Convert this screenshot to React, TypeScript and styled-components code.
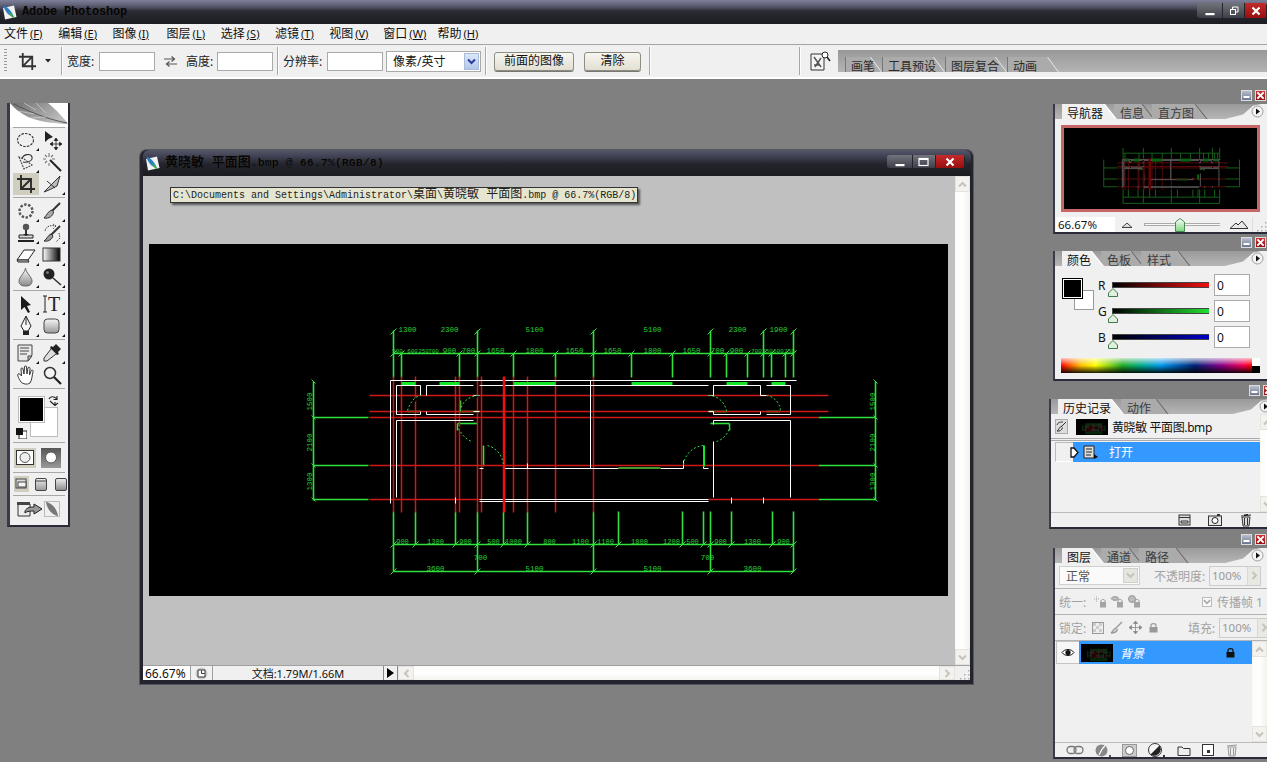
import React from "react";
import styled, { createGlobalStyle } from "styled-components";

const SANS = `"Noto Sans","Noto Sans CJK SC",sans-serif`;
const MONO = `"Liberation Mono","Noto Sans CJK SC",monospace`;

const Global = createGlobalStyle`
  html, body { margin: 0; padding: 0; width: 100%; height: 100%; overflow: hidden; background: #808080; }
  * { box-sizing: border-box; }
  #root { width: 100%; height: 100%; }
`;

const Shell = styled.div`
  width: 1267px; height: 762px; display: flex; flex-direction: column; overflow: hidden;
  font-family: ${SANS}; font-size: 12px; color: #111;
`;

/* ---------- app chrome ---------- */
const AppBar = styled.header`
  height: 24px; flex: none; display: flex; align-items: center; padding-left: 2px;
  background: linear-gradient(#7d7f99 0, #6d6f86 3px, #4a4b5b 8px, #2a2b33 11px, #1c1d23 24px);
`;
const AppTitle = styled.span`
  margin-left: 5px; font: bold 12px/1 ${MONO}; letter-spacing: -.2px; color: #050505;
  text-shadow: 0 0 1px #3a3a3a;
`;
const WinButtons = styled.div<{ $h: number; $mr: number; $mt: number }>`
  display: flex; height: ${p => p.$h}px; align-self: flex-start; margin: ${p => p.$mt}px ${p => p.$mr}px 0 auto; border-radius: 3px; overflow: hidden;
`;
const WinButton = styled.div<{ $w: number; $close?: boolean }>`
  width: ${p => p.$w}px; display: flex; align-items: center; justify-content: center;
  border-right: 1px solid #22232b;
  background: ${p => p.$close ? "linear-gradient(#c52a2a,#970f0f)" : "linear-gradient(#72747c,#3d3e47)"};
`;
const MenuBar = styled.nav`
  height: 21px; flex: none; display: flex; align-items: center; padding-left: 4px;
  background: #f0f0f0; border-bottom: 1px solid #a4a4a4;
`;
const MenuItem = styled.span`
  width: 54.2px; flex: none; font-size: 12px; line-height: 20px; color: #111; white-space: nowrap;
`;
const Accel = styled.span`
  font-size: 11px; margin-left: 2px; text-decoration: underline;
`;
const OptionsBar = styled.div`
  height: 34px; flex: none; display: flex; align-items: center; padding-left: 4px;
  background: linear-gradient(#f0f0f0 32px, #fff 32px);
  padding-bottom: 2px;
`;
const Grip = styled.div`
  width: 3px; height: 24px; background: repeating-linear-gradient(#9a9a9a 0 1px, transparent 1px 3px);
`;
const IconCell = styled.div<{ $w: number; $ml?: number }>`
  width: ${p => p.$w}px; margin-left: ${p => p.$ml ?? 0}px; flex: none; height: 100%;
  display: flex; align-items: center; justify-content: center; gap: ${p => p.$w > 40 ? 8 : 0}px;
`;
const BarSep = styled.div<{ $ml?: number }>`
  width: 2px; height: 28px; flex: none; margin-left: ${p => p.$ml ?? 0}px;
  border-left: 1px solid #a8a8a8; border-right: 1px solid #fff;
`;
const BarLabel = styled.span<{ $w: number; $ml?: number }>`
  width: ${p => p.$w}px; margin-left: ${p => p.$ml ?? 0}px; flex: none; font-size: 12px; color: #222; white-space: nowrap;
`;
const BarField = styled.div`
  width: 56px; height: 19px; flex: none; background: #fff; border: 1px solid #a9a9a9;
`;
const BarSelect = styled.div`
  width: 95px; height: 21px; flex: none; margin-left: 3px; display: flex; align-items: center; justify-content: space-between;
  background: #fff; border: 1px solid #aaa; padding: 1px 1px 1px 6px; font-size: 12px;
`;
const SelectArrow = styled.div`
  width: 15px; height: 17px; display: flex; align-items: center; justify-content: center;
  background: linear-gradient(#dce6f6,#b4c8ec); border: 1px solid #a8bcdc;
`;
const BarButton = styled.button<{ $w: number; $ml: number }>`
  width: ${p => p.$w}px; height: 19px; margin-left: ${p => p.$ml}px; flex: none; padding: 0;
  font: 12px/1 ${SANS}; color: #111; border: 1px solid #8f8d80; border-radius: 3px;
  background: linear-gradient(#f7f6f0,#e2dfd2); box-shadow: 0 1px 0 #777;
`;
const Well = styled.div`
  flex: 1; height: 22px; align-self: flex-start; margin-top: 5px; display: flex; align-items: flex-end; padding-left: 7px;
  background: linear-gradient(#989898,#b4b4b4);
`;
const WellTab = styled.span<{ $w: number }>`
  position: relative; width: ${p => p.$w}px; height: 15px; flex: none; padding-left: 5px;
  font-size: 12px; line-height: 19px; color: #2a2a2a; background: #ababab; border-left: 1px solid #777;
  clip-path: polygon(0 0, calc(100% - 11px) 0, 100% 100%, 0 100%);
  &::after {
    content: ""; position: absolute; right: 5px; top: -2px; width: 1px; height: 20px; background: #eee; transform: rotate(-36deg);
  }
`;

/* ---------- desktop & floating windows ---------- */
const Desktop = styled.main`
  position: relative; flex: 1; background: #808080;
`;
const Float = styled.div<{ $x: number; $y: number; $w: number; $h: number }>`
  position: absolute; left: ${p => p.$x}px; top: ${p => p.$y - 79}px; width: ${p => p.$w}px; height: ${p => p.$h}px;
`;

/* tool palette */
const Palette = styled(Float)`
  display: flex; flex-direction: column; background: #f0f0f0;
  border-left: 3px solid #3a3a4c; border-right: 2px solid #2a2a38; border-bottom: 2px solid #2a2a38;
`;
const FeatherBox = styled.div`
  height: 24px; flex: none; background: #fff; overflow: hidden;
`;
const PalSep = styled.div`
  height: 1px; flex: none; margin: 0 3px; background: #a8a8a8;
`;
const ToolGrid = styled.div<{ $pt: number; $pb: number }>`
  display: grid; grid-template-columns: 26px 26px; grid-auto-rows: 22px;
  padding: ${p => p.$pt}px 0 ${p => p.$pb}px 3px;
`;
const Tool = styled.div<{ $active?: boolean; $more?: boolean }>`
  position: relative; display: flex; align-items: center; justify-content: center;
  ${p => p.$active ? "background:#cfceBf;" : ""}
  ${p => p.$more ? `&::after{content:"";position:absolute;right:0;bottom:0;border-left:3px solid transparent;border-bottom:3px solid #111;}` : ""}
`;
const ColorBlock = styled.div`
  position: relative; height: 53px; flex: none;
`;
const FgSwatch = styled.div`
  position: absolute; left: 8px; top: 7px; width: 27px; height: 27px; background: #000; border: 1px solid #bbb; box-shadow: inset 0 0 0 1px #fff; z-index: 1;
`;
const BgSwatch = styled.div`
  position: absolute; left: 20px; top: 18px; width: 28px; height: 30px; background: #fff; border: 1px solid #bbb;
`;
const OverIcon = styled.div<{ $l: number; $t: number }>`
  position: absolute; left: ${p => p.$l}px; top: ${p => p.$t}px; line-height: 0;
`;
const ModeRow = styled.div<{ $h: number }>`
  height: ${p => p.$h}px; flex: none; display: flex; align-items: center; padding-left: 4px; gap: 5px;
`;
const ModeButton = styled.div<{ $w: number; $active?: boolean; $dark?: boolean }>`
  width: ${p => p.$w}px; height: 20px; display: flex; align-items: center; justify-content: center;
  background: ${p => p.$active ? "#cfcebf" : p.$dark ? "linear-gradient(#555,#999)" : "transparent"};
`;
const ScreenBtn = styled.div<{ $active?: boolean }>`
  width: 16px; height: 16px; display: flex; align-items: center; justify-content: center;
  background: ${p => p.$active ? "#cfcebf" : "transparent"};
`;
const JumpRow = styled.div`
  flex: 1; display: flex; align-items: center; padding: 0 0 3px 7px; gap: 1px;
`;

/* document window */
const DocWindow = styled(Float)`
  display: flex; flex-direction: column; background: #23242e; border-radius: 7px 7px 0 0;
  box-shadow: 0 0 0 1px #55565f; padding: 0 3px 4px;
`;
const DocTitle = styled.div`
  height: 26px; flex: none; display: flex; align-items: center; padding-left: 2px;
  margin: 0 -1px 0 0;
  background: linear-gradient(#555665 0,#45465a 5px,#24252c 14px,#1b1c22 26px); border-radius: 6px 6px 0 0;
`;
const DocTitleText = styled.span`
  margin-left: 5px; font: bold 11.67px/1 ${MONO}; color: #060606; text-shadow: 0 0 1px #444;
`;
const DocTitleHan = styled.span`
  font-size: 13px;
`;
const DocMain = styled.div`
  flex: 1; display: flex; min-height: 0;
`;
const DocArea = styled.div`
  position: relative; flex: 1; display: flex; align-items: center; justify-content: center; background: #c0c0c0;
  padding: 0 1px 1px 0;
`;
const Artboard = styled.div`
  width: 799px; height: 352px; flex: none; background: #000; line-height: 0;
`;
const PathTip = styled.div`
  position: absolute; left: 27px; top: 11px; height: 16px; padding: 0 1px 0 2px; white-space: nowrap;
  background: #e6e6d0; border: 1px solid #333; box-shadow: 2px 2px 2px #555;
  font: 10px/14px ${MONO}; color: #222;
`;
const TipHan = styled.span`
  font-size: 12px;
`;
const ScrollV = styled.div<{ $w?: number }>`
  width: ${p => p.$w ?? 15}px; flex: none; display: flex; flex-direction: column; justify-content: space-between;
  background: linear-gradient(90deg,#fbfbf7,#fff 50%,#f2f1ec);
`;
const ScrollBtn = styled.div<{ $w: number; $h: number }>`
  width: ${p => p.$w}px; height: ${p => p.$h}px; flex: none; display: flex; align-items: center; justify-content: center;
  background: #f3f2ee; border: 1px solid #e4e3dd;
`;
const StatusBar = styled.div`
  height: 15px; flex: none; display: flex; background: #f0f0f0; border-top: 1px solid #a0a0a0;
`;
const StatusZoom = styled.div`
  width: 47px; flex: none; background: #fff; padding-left: 2px; font-size: 12px; line-height: 15px; color: #111;
`;
const StatusIcon = styled.div`
  width: 23px; flex: none; display: flex; align-items: center; justify-content: center; border-left: 1px solid #a0a0a0; border-right: 1px solid #a0a0a0;
`;
const StatusInfo = styled.div`
  width: 170px; flex: none; text-align: center; font-size: 11px; line-height: 15px; color: #111;
`;
const StatusArrow = styled.div`
  width: 15px; flex: none; display: flex; align-items: center; justify-content: center; border-left: 1px solid #888; border-right: 1px solid #888;
`;
const ScrollH = styled.div`
  flex: 1; display: flex; justify-content: space-between; background: linear-gradient(#fbfbf7,#fff 50%,#f4f3ee);
`;
const Corner = styled.div`
  width: 15px; flex: none; display: flex; align-items: flex-end; justify-content: flex-end; background: #f0f0f0;
`;

/* panels */
const PanelFrame = styled(Float)`
  display: flex; flex-direction: column;
`;
const CaptionStrip = styled.div`
  height: 14px; flex: none; display: flex; justify-content: flex-end; align-items: flex-start; gap: 3px; padding-right: 1px;
`;
const CapBtn = styled.div<{ $close?: boolean }>`
  width: 11px; height: 11px; display: flex; align-items: center; justify-content: center;
  border: 1px solid #dcdcdc;
  background: ${p => p.$close ? "linear-gradient(#d23030,#8f1010)" : "linear-gradient(#b8bfce,#6d7690)"};
`;
const PanelBody = styled.section`
  flex: 1; min-height: 0; display: flex; flex-direction: column; background: #f0f0f0;
  border-left: 2px solid #3a3a48; border-bottom: 2px solid #2a2a38;
`;
const TabStrip = styled.div`
  position: relative; height: 15px; flex: none; display: flex; align-items: flex-end; padding-left: 7px;
  background: linear-gradient(#9a9a9a,#b6b6b6);
`;
const PanelTab = styled.span<{ $w: number; $on?: boolean }>`
  position: relative; width: ${p => p.$w}px; margin-right: -3px; flex: none; height: 15px; padding-left: ${p => p.$on ? 5 : 6}px;
  font-size: 12px; line-height: 19px; white-space: nowrap; z-index: ${p => p.$on ? 2 : 1};
  color: ${p => p.$on ? "#111" : "#3c3c3c"};
  background: ${p => p.$on ? "#f0f0f0" : "#ababab"};
  clip-path: polygon(0 0, calc(100% - 12px) 0, 100% 100%, 0 100%);
  &::after {
    content: ""; position: absolute; right: 6px; top: -2px; width: 1px; height: 20px; background: ${p => p.$on ? "#fff" : "#666"}; transform: rotate(-38deg);
  }
`;
const TabCap = styled.div`
  position: absolute; right: 0; top: 0; height: 15px; width: 42px; display: flex; align-items: center; justify-content: flex-end; padding-right: 3px;
  background: #f0f0f0; clip-path: polygon(0 100%, 18px 70%, 28px 12%, 36px 0, 100% 0, 100% 100%);
`;
const Thumb = styled.div`
  width: 199px; height: 87px; margin: 6px 0 5px 6px; flex: none; background: #000; border: 3px solid #c76666; line-height: 0;
`;
const NavFoot = styled.div`
  height: 15px; display: flex; align-items: center; padding-left: 1px;
`;
const NavZoom = styled.div`
  width: 59px; height: 15px; background: #fff; font-size: 11.5px; line-height: 15px; padding-left: 2px;
`;
const NavSlider = styled.div`
  position: relative; width: 76px; height: 3px; margin: 0 10px 0 7px; border: 1px solid #aaa; border-right: none; background: #f8f8f8;
`;
const NavKnob = styled.div`
  position: absolute; left: 30px; top: -6px; line-height: 0;
`;
const Grip2 = styled.div`
  width: 15px; height: 15px; margin-left: auto; flex: none; display: flex; align-items: flex-end; justify-content: flex-end;
  border-left: 1px solid #ddd; 
`;
const ColorMain = styled.div`
  display: flex; padding: 8px 0 0 7px;
`;
const SwatchPair = styled.div`
  position: relative; width: 33px; height: 33px; margin-top: 4px; flex: none;
`;
const ColorFg = styled.div`
  position: absolute; left: 0; top: 0; width: 21px; height: 21px; background: #000; border: 1px solid #000; box-shadow: inset 0 0 0 1px #fff; z-index: 1;
`;
const ColorBg = styled.div`
  position: absolute; left: 12px; top: 12px; width: 20px; height: 20px; background: #fff; border: 1px solid #999;
`;
const Sliders = styled.div`
  display: flex; flex-direction: column; gap: 4px; margin-left: 3px;
`;
const SliderRow = styled.div`
  display: flex; align-items: center; height: 22px;
`;
const ChanLabel = styled.span`
  width: 14px; flex: none; font-size: 12px; color: #111;
`;
const ChanBar = styled.div<{ $c: string }>`
  position: relative; width: 97px; height: 6px; flex: none; border: 1px solid #444; border-right: none; background: linear-gradient(90deg,#000,${p => p.$c});
`;
const ChanKnob = styled.div`
  position: absolute; left: -5px; top: 5px; line-height: 0;
`;
const ChanValue = styled.div`
  width: 36px; height: 22px; flex: none; margin-left: 5px; padding: 2px 0 0 2px; background: #fff; border: 1px solid #aaa; font-size: 12px;
`;
const Spectrum = styled.div`
  display: flex; height: 15px; margin: 10px 0 0 6px; width: 199px; flex: none;
`;
const SpectrumRamp = styled.div`
  flex: 1;
  background:
    linear-gradient(rgba(255,255,255,.75) 0, rgba(255,255,255,0) 50%, rgba(0,0,0,0) 50%, rgba(0,0,0,.9) 100%),
    linear-gradient(90deg,#f00 0,#fb0 10%,#ff0 18%,#2a2 32%,#0a8 42%,#09e 52%,#027 70%,#808 84%,#e05 95%,#f00 100%);
`;
const SpectrumEnds = styled.div`
  width: 8px; background: linear-gradient(#fff 50%,#000 50%);
`;

const PaneRow = styled.div`
  flex: 1; display: flex; min-height: 0;
`;
const PaneList = styled.div`
  flex: 1; min-width: 0; display: flex; flex-direction: column;
`;
const SnapRow = styled.div`
  height: 23px; margin-top: 1px; flex: none; display: flex; align-items: center; padding-left: 4px;
`;
const SmallBox = styled.div`
  width: 13px; height: 15px; flex: none; display: flex; align-items: center; justify-content: center; border: 1px solid #aaa; background: #ddd;
`;
const Mini = styled.div`
  width: 32px; height: 16px; flex: none; margin-left: 8px; background: #000; line-height: 0;
`;
const SnapName = styled.span`
  margin-left: 4px; font-size: 12px; letter-spacing: -.4px; color: #111; white-space: nowrap;
`;
const DoubleRule = styled.div`
  height: 3px; margin-bottom: 1px; flex: none; border-top: 1px solid #aaa; border-bottom: 1px solid #aaa;
`;
const HistRow = styled.div`
  height: 20px; flex: none; display: flex; align-items: stretch; padding-left: 4px;
`;
const HistCheck = styled.div`
  width: 18px; flex: none; border: 1px solid #bbb; border-right: none; border-bottom-color: #fff;
`;
const HistMark = styled.div`
  position: relative; flex: 1; display: flex; align-items: center; background: #3399ff; color: #fff; padding-left: 10px; gap: 10px; font-size: 12px;
`;
const HistArrow = styled.div`
  position: absolute; left: -3px; top: 5px; line-height: 0;
`;
const PaneFoot = styled.div`
  height: 15px; flex: none; display: flex; align-items: center; border-top: 1px solid #bbb; position: relative;
`;
const FootIcons = styled.div<{ $gap: number; $pl: number }>`
  display: flex; align-items: center; gap: ${p => p.$gap}px; padding-left: ${p => p.$pl}px;
`;
const OptRow = styled.div<{ $h: number }>`
  height: ${p => p.$h}px; flex: none; display: flex; align-items: center; padding-left: 4px; border-bottom: 1px solid #b4b4b4; color: #a2a2a2; font-size: 12px; white-space: nowrap;
`;
const BlendSelect = styled.div`
  width: 81px; height: 19px; flex: none; display: flex; align-items: center; justify-content: space-between; padding: 0 1px 0 6px; color: #555;
  background: #fafafa; border: 1px solid #d0d0d0;
`;
const BlendArrow = styled.div`
  width: 15px; height: 15px; display: flex; align-items: center; justify-content: center; background: #e6e6e0; border: 1px solid #d0d0c8;
`;
const OptLabel = styled.span<{ $w: number; $ml?: number }>`
  width: ${p => p.$w}px; margin-left: ${p => p.$ml ?? 0}px; flex: none;
`;
const PctField = styled.div`
  width: 52px; height: 20px; flex: none; margin-left: 3px; display: flex; align-items: center; justify-content: space-between; padding-left: 2px;
  border: 1px solid #ccc; color: #9a9a9a; font-size: 11.5px; background: #f0f0f0;
`;
const PctStep = styled.div`
  width: 13px; height: 18px; display: flex; align-items: center; justify-content: center; background: #e9e9e3; border-left: 1px solid #d8d8d8;
`;
const IconRow = styled.div<{ $gap: number; $ml: number }>`
  display: flex; align-items: center; gap: ${p => p.$gap}px; margin-left: ${p => p.$ml}px;
`;
const Check = styled.div`
  width: 10px; height: 10px; flex: none; margin: 0 5px 0 60px; display: flex; align-items: center; justify-content: center; border: 1px solid #bbb; background: #f8f8f8;
`;
const LayerRow = styled.div`
  height: 23px; flex: none; display: flex; align-items: stretch; padding-left: 1px;
`;
const EyeCell = styled.div`
  width: 23px; flex: none; display: flex; align-items: center; justify-content: center; background: #f6f6f6; border: 1px solid #c4c4c4; border-right: none;
`;
const LayerMark = styled.div`
  flex: 1; display: flex; align-items: center; padding: 0 16px 0 2px; background: #3399ff; color: #fff; 
`;
const LayerThumb = styled.div`
  width: 32px; height: 18px; flex: none; background: #000; line-height: 0;
`;
const LayerName = styled.span`
  margin-left: 7px; font-size: 12px; font-style: italic; color: #fff; flex: 1;
`;

/* ---------- drawings ---------- */
const Svg = ({ w = 22, h = 22, vb, children }: any) => (
  <svg width={w} height={h} viewBox={vb ?? `0 0 ${w} ${h}`} fill="none" style={{ display: "block", flex: "none" }}>{children}</svg>
);

const Chev = ({ dir = "up", c = "#c4c4bc", s = 9 }: { dir?: string; c?: string; s?: number }) => {
  const d = { up: "M1 6.5 L4.5 3 L8 6.5", down: "M1 2.5 L4.5 6 L8 2.5", left: "M6.5 1 L3 4.5 L6.5 8", right: "M2.5 1 L6 4.5 L2.5 8" }[dir];
  return <Svg w={s} h={s} vb="0 0 9 9"><path d={d} stroke={c} strokeWidth="2" /></Svg>;
};

const AppIcon = () => (
  <Svg w={15} h={15} vb="0 0 15 15">
    <path d="M1 3 L12 0.5 L14.5 12 L3 14.5 Z" fill="#f2f2f2" />
    <path d="M1.5 1 C5 1 9 5 12 12 C7 11 3 7 1.5 1Z" fill="#2a7fc4" />
    <path d="M7 7 C9 8 11 10 12.5 13 C10 13 8 11 7 7Z" fill="#45b04a" />
  </Svg>
);

const CloseGlyph = ({ s = 10 }) => <Svg w={s} h={s} vb="0 0 10 10"><path d="M1.5 1.5 L8.5 8.5 M8.5 1.5 L1.5 8.5" stroke="#fff" strokeWidth="2.2" /></Svg>;
const MinGlyph = () => <Svg w={12} h={10} vb="0 0 12 10"><rect x="1.5" y="7" width="9" height="2.2" fill="#fff" /></Svg>;
const MaxGlyph = () => <Svg w={12} h={10} vb="0 0 12 10"><rect x="1" y="1.5" width="9" height="7" stroke="#fff" strokeWidth="1.2" /><rect x="1" y="1" width="9" height="2" fill="#fff" /></Svg>;
const RestoreGlyph = () => <Svg w={10} h={10} vb="0 0 10 10"><path d="M3.5 3 V1 H9 V6 H7" stroke="#fff" /><rect x="1.5" y="3.5" width="5" height="5" stroke="#fff" /></Svg>;
const CapMin = () => <Svg w={9} h={9} vb="0 0 9 9"><rect x="1.5" y="5" width="6" height="2" fill="#fff" /></Svg>;
const MenuDot = () => (
  <Svg w={13} h={13} vb="0 0 13 13"><circle cx="6.5" cy="6.5" r="5.5" fill="#f4f4f4" stroke="#9a9a9a" /><path d="M5 3.5 L9 6.5 L5 9.5Z" fill="#111" /></Svg>
);
const Grip3 = ({ c = "#b0b0b0" }) => (
  <Svg w={12} h={12} vb="0 0 12 12"><path d="M10 2h1.5v1.5H10zM6 6h1.5v1.5H6zM10 6h1.5v1.5H10zM2 10h1.5v1.5H2zM6 10h1.5v1.5H6zM10 10h1.5v1.5H10z" fill={c} /></Svg>
);

const CropIcon = ({ s = 20, c = "#333" }) => (
  <Svg w={s} h={s} vb="0 0 20 20"><path d="M5 1 V15 H19 M1 5 H15 V19 M14 6 L6 14" stroke={c} strokeWidth="1.9" /></Svg>
);

const Grad = ({ id, a, b, x2 = "0", y2 = "1" }: any) => (
  <defs><linearGradient id={id} x1="0" y1="0" x2={x2} y2={y2}><stop offset="0" stopColor={a} /><stop offset="1" stopColor={b} /></linearGradient></defs>
);

const tools: Record<string, React.ReactNode> = {
  marquee: <Svg><ellipse cx="10.5" cy="11" rx="8" ry="6.5" stroke="#333" strokeWidth="1.1" strokeDasharray="2.5 1.2" /></Svg>,
  move: <Svg><path d="M4 2 V13 L7.5 10 L12 8 Z" fill="#222" /><path d="M15 10 V20 M10 15 H20 M15 9 L13.2 11.5 H16.8Z M15 21 L13.2 18.5 H16.8Z M9 15 L11.5 13.2 V16.8Z M21 15 L18.5 13.2 V16.8Z" stroke="#222" fill="#222" strokeWidth=".8" /></Svg>,
  lasso: <Svg><path d="M7 8 C8 3 16 2 17 6 C18 10 12 12 8 11" stroke="#333" strokeWidth="1.1" /><path d="M4 6 L9 18 L17 14 L9 8 Z" stroke="#444" strokeWidth="1.1" strokeDasharray="2 1" /></Svg>,
  wand: <Svg><path d="M9 9 L20 20" stroke="#222" strokeWidth="2" /><path d="M8 2 V6 M8 12 V15 M2 8 H5 M11 8 H14 M4 4 L6 6 M12 4 L10 6 M4 12 L6 10" stroke="#777" strokeWidth="1.1" /></Svg>,
  crop: <CropIcon s={20} c="#2c2c2c" />,
  slice: <Svg><path d="M3 19 L19 3 L16 13 L8 17Z" fill="#bbb" stroke="#333" /><path d="M6 8 L14 15" stroke="#333" /></Svg>,
  heal: <Svg><circle cx="11" cy="11" r="6.5" fill="#eee" stroke="#555" strokeWidth="2.4" strokeDasharray="2.4 1.6" /></Svg>,
  brush: <Svg><path d="M19 3 L10 12" stroke="#333" strokeWidth="2" /><path d="M11 10 C7 11 6 15 3 18 C8 19 12 16 12.5 12Z" fill="#aaa" stroke="#333" /></Svg>,
  stamp: <Svg><circle cx="11" cy="5" r="3.2" fill="#555" /><path d="M10 8 H12 V12 H10Z" fill="#333" /><path d="M4 13 H18 V16 H4Z" fill="#ddd" stroke="#222" /><path d="M3 18 H19 V20 H3Z" fill="#222" /><path d="M11 14 L8 12 H14Z" fill="#222" /></Svg>,
  histBrush: <Svg><path d="M19 4 L9 14" stroke="#333" strokeWidth="2" /><path d="M10 12 C7 13 6 17 3 19 C8 20 11 17 12 14Z" fill="#999" stroke="#333" /><path d="M4 9 C5 4 10 3 14 4 M15 4 L12 2 M15 4 L12 7 M18 11 L19 16 L15 20" stroke="#444" strokeDasharray="1.5 1" /></Svg>,
  eraser: <Svg><path d="M2 16 L9 6 H20 L13 16Z" fill="#fff" stroke="#222" /><path d="M2 16 H13 L14 18 H3Z" fill="#ccc" stroke="#222" /></Svg>,
  gradient: <Svg><Grad id="gr" a="#fff" b="#000" x2="1" y2="0" /><rect x="2" y="4" width="17" height="13" fill="url(#gr)" stroke="#333" /></Svg>,
  drop: <Svg><Grad id="dr" a="#fff" b="#888" /><path d="M10.5 2 C10 7 4 11 4 15 C4 19 7 20 10.5 20 C14 20 17 19 17 15 C17 11 11 7 10.5 2Z" fill="url(#dr)" stroke="#666" /></Svg>,
  burn: <Svg><circle cx="8" cy="8" r="5.5" fill="#222" /><circle cx="6.5" cy="6.5" r="1.3" fill="#888" /><path d="M12 12 L20 19" stroke="#333" strokeWidth="1.6" /></Svg>,
  arrow: <Svg><path d="M6 3 V17 L9.5 14 L13 20 L15 19 L12 13 L16 12 Z" fill="#1a1a1a" /></Svg>,
  type: <Svg><path d="M4 3 V19 M2 19 H6 M2 3 H6" stroke="#222" /><text x="7" y="18" fontFamily="'Liberation Serif',serif" fontSize="20" fill="#222">T</text></Svg>,
  pen: <Svg><path d="M11 1 L16 11 L13 16 H9 L6 11Z" fill="#f4f4f4" stroke="#222" /><path d="M11 2 V10" stroke="#222" /><rect x="8" y="16" width="6" height="4" fill="#222" /></Svg>,
  shape: <Svg><Grad id="sh" a="#f6f6f6" b="#999" /><rect x="3" y="4" width="15" height="14" rx="3.5" fill="url(#sh)" stroke="#444" /></Svg>,
  notes: <Svg><path d="M3 3 H17 V13 L13 19 H3Z" fill="#e8e8e8" stroke="#444" /><path d="M5 6 H14 M5 9 H14 M5 12 H12" stroke="#444" /><path d="M13 19 V14 H17Z" fill="#bbb" stroke="#444" /></Svg>,
  eyedrop: <Svg><path d="M17 4 L15 2 L12 5 L10 4 L9 6 L16 13 L18 12 L17 10 L20 7Z" fill="#222" /><path d="M10 7 L3 16 V19 H6 L15 12" fill="#ddd" stroke="#333" /></Svg>,
  hand: <Svg><path d="M6 18 C4 15 2 11 3 10 C4 9 6 11 6.5 12 L6 5 C6 3.5 8 3.5 8 5 L9 10 L9.5 3 C9.5 1.5 11.5 1.5 11.5 3 L12 10 L13 4 C13.5 2.5 15 3 15 4.5 L14.5 11 L16 7 C16.5 5.5 18.5 6 18 7.5 C17 12 17 16 15 19 C12 21 8 20 6 18Z" fill="#fff" stroke="#333" /></Svg>,
  zoom: <Svg><circle cx="9" cy="9" r="5.5" fill="#f4f4f4" stroke="#333" strokeWidth="1.5" /><path d="M13 13 L20 20" stroke="#222" strokeWidth="2.2" /></Svg>,
};

const FeatherArt = () => (
  <Svg w={58} h={24} vb="0 0 58 24">
    <Grad id="fe" a="#6e6e6e" b="#bdbdbd" x2="1" y2=".5" />
    <path d="M0 0 H38 C44 5 50 11 56 18 L58 21 C48 21 30 19 18 14 C10 10 4 5 0 0Z" fill="url(#fe)" />
    <path d="M4 1 C18 8 36 16 57 20" stroke="#4e4e4e" strokeWidth=".9" />
    <path d="M14 0 L26 7 M26 0 L36 10 M8 8 L24 11 M20 15 L36 14" stroke="#ddd" strokeWidth=".6" />
  </Svg>
);

const G = "#2fe03f", R = "#d01818", Wh = "#fff";
const vTopDim = [393, 401, 459, 477, 513, 555, 593, 631, 672, 710, 726, 747, 763, 771, 785, 793];
const vBotDim = [393, 415, 455, 477, 503, 527, 593, 618, 682, 703, 710, 731, 772, 793];
const redV = [393, 401, 415, 455, 459, 477, 481, 513, 527, 555, 593];
type L = [number, number, number, number];
const greenLines: L[] = [
  [393, 353, 793, 353], [393, 330, 393, 353], [477, 330, 477, 353], [593, 330, 593, 353], [710, 330, 710, 353], [763, 330, 763, 353], [793, 330, 793, 353],
  [393, 544, 793, 544], [393, 571, 793, 571], [393, 544, 393, 571], [477, 544, 477, 571], [593, 544, 593, 571], [710, 544, 710, 571], [793, 544, 793, 571],
  [313, 381, 313, 500], [313, 417, 368, 417], [313, 465, 368, 465], [313, 499, 368, 499],
  [875, 381, 875, 500], [818, 417, 875, 417], [818, 465, 875, 465], [818, 499, 875, 499],
  [407, 411, 420, 411], [460, 411, 479, 411], [460, 400, 460, 411], [457, 423, 477, 423], [457, 423, 457, 430], [483, 445, 483, 466],
  [708, 411, 726, 411], [766, 411, 780, 411], [710, 423, 729, 423], [729, 423, 729, 430],
  ...vTopDim.map(x => [x, 353, x, 377] as L),
  ...vBotDim.map(x => [x, 511, x, 544] as L),
];
const redLines: L[] = [
  [369, 395, 828, 395], [369, 411, 828, 411], [369, 417, 818, 417], [369, 465, 818, 465], [369, 499, 479, 499], [708, 499, 818, 499],
  ...redV.map(x => [x, 376, x, 512] as L),
];
const whiteLines: L[] = [
  [390, 380, 796, 380], [390, 380, 390, 503], [396, 385, 396, 414], [396, 420, 396, 497],
  [396, 385, 420, 385], [420, 385, 420, 395], [426, 385, 426, 395], [426, 385, 473, 385], [479, 385, 708, 385],
  [713, 385, 760, 385], [713, 385, 713, 395], [760, 385, 760, 395], [760, 395, 766, 395], [766, 385, 790, 385], [790, 385, 790, 414],
  [396, 414, 420, 414], [420, 411, 420, 414], [426, 411, 426, 414], [426, 414, 473, 414], [713, 411, 713, 414], [713, 414, 760, 414], [760, 411, 760, 414], [766, 414, 790, 414],
  [708, 395, 713, 395], [708, 411, 713, 411], [473, 395, 479, 395], [473, 411, 479, 411],
  [396, 420, 473, 420], [713, 420, 790, 420], [713, 420, 713, 424], [713, 441, 713, 497], [790, 420, 790, 497],
  [503, 468, 618, 468], [660, 468, 683, 468], [683, 460, 683, 468], [479, 468, 483, 468], [703, 466, 703, 468], [703, 468, 708, 468], [527, 463, 527, 468],
  [590, 380, 590, 468], [479, 499, 708, 499], [479, 501, 708, 501], [455, 497, 455, 503], [731, 497, 731, 503], [763, 497, 763, 503],
];
const thickGreen: L[] = [[401, 383, 415, 383], [439, 383, 459, 383], [513, 383, 555, 383], [631, 383, 672, 383], [726, 383, 747, 383], [771, 383, 785, 383]];
const doors = ["M407 410 C409 403 414 396 420 395", "M460 411 C460 402 469 395 479 395", "M457 424 C459 432 464 438 471 441", "M487 445 C495 447 502 454 503 465", "M708 395 C717 395 725 402 726 411", "M766 395 C774 396 780 403 780 411", "M729 425 C729 432 723 439 716 441", "M703 445 C692 446 684 454 683 465"];
const topLabels: [number, string][] = [[407, "1300"], [449, "2300"], [534, "5100"], [652, "5100"], [737, "2300"], [778, "1900"]];
const rowLabels: [number, string][] = [[397, "500"], [412, "600"], [423, "250"], [433, "700"], [449, "900"], [468, "700"], [495, "1650"], [534, "1800"], [574, "1650"], [612, "1650"], [652, "1800"], [691, "1650"], [717, "700"], [736, "900"], [756, "700"], [767, "250"], [778, "600"], [789, "250"]];
const botLabels: [number, string][] = [[402, "900"], [435, "1300"], [465, "900"], [493, "500"], [513, "1000"], [549, "800"], [580, "1100"], [605, "1100"], [639, "1800"], [671, "1200"], [692, "500"], [720, "900"], [752, "1300"], [783, "900"]];
const dimLabels: [number, string][] = [[435, "3600"], [534, "5100"], [652, "5100"], [752, "3600"]];

const Seg = ({ l, c, sw = 1, thin }: { l: L; c: string; sw?: number; thin?: boolean }) => (
  <line x1={l[0]} y1={l[1]} x2={l[2]} y2={l[3]} stroke={c} strokeWidth={sw} vectorEffect={thin ? "non-scaling-stroke" : undefined} />
);

const Plan = ({ mini, dim = 1 }: { mini?: boolean; dim?: number }) => {
  const txt = (x: number, y: number, t: string, k: string, rot?: boolean, fs = 7.5) => (
    <text key={k} x={x} y={y} textAnchor="middle" fontFamily="'Liberation Mono',monospace" fontSize={fs} fill={G} opacity=".9" transform={rot ? `rotate(-90 ${x} ${y})` : undefined}>{t}</text>
  );
  const ticks = [
    ...vTopDim.map(x => [x, 353]), ...vBotDim.map(x => [x, 544]), ...[393, 477, 593, 710, 763, 793].map(x => [x, 331]),
    ...[393, 477, 593, 710, 793].map(x => [x, 571]),
  ];
  return (
    <svg width="100%" height="100%" viewBox="148.5 243.5 799 352" preserveAspectRatio="none" style={{ display: "block", opacity: dim }}>
      {greenLines.map((l, i) => <Seg key={i} l={l} c={G} sw={mini ? 1 : 1.6} thin={mini} />)}
      {redLines.map((l, i) => <Seg key={i} l={l} c={R} sw={mini ? 1 : 1.5} thin={mini} />)}
      {whiteLines.map((l, i) => <Seg key={i} l={l} c={mini ? "#ccc" : Wh} thin={mini} />)}
      {thickGreen.map((l, i) => <Seg key={i} l={l} c="#14e62a" sw={3} thin={mini} />)}
      <Seg l={[703.5, 445, 703.5, 466]} c="#14e62a" sw={2} thin={mini} />
      <Seg l={[618, 467.5, 660, 467.5]} c="#3f9a30" sw={2} thin={mini} />
      <Seg l={[503.5, 376, 503.5, 512]} c="#f01010" sw={2.5} thin={mini} />
      {!mini && <g>
        {doors.map((d, i) => <path key={i} d={d} stroke={G} strokeDasharray="2 2" />)}
        {ticks.map(([x, y], i) => <path key={i} d={`M${x - 3} ${y + 3} L${x + 3} ${y - 3}`} stroke={G} />)}
        {[[313, 381], [313, 417], [313, 465], [313, 499], [875, 381], [875, 417], [875, 465], [875, 499]].map(([x, y], i) => <path key={i} d={`M${x - 2} ${y - 2} L${x + 2} ${y + 2}`} stroke={G} />)}
        {topLabels.map(([x, t], i) => txt(x, 331, t, "t" + i))}
        {rowLabels.map(([x, t], i) => txt(x, 352, t, "r" + i, false, x < 440 || x > 750 ? 5.8 : 7.5))}
        {botLabels.map(([x, t], i) => txt(x, 543, t, "b" + i, false, 7))}
        {dimLabels.map(([x, t], i) => txt(x, 570, t, "d" + i))}
        {txt(480, 559, "700", "m1")}{txt(707, 559, "700", "m2")}
        {[[401, "1500"], [442, "2100"], [481, "1300"]].flatMap(([y, t], i) => [txt(311, y as number, t as string, "l" + i, true), txt(874, y as number, t as string, "q" + i, true)])}
      </g>}
    </svg>
  );
};

const Mountain = ({ big }: { big?: boolean }) => (
  <Svg w={big ? 18 : 10} h={big ? 9 : 6} vb={big ? "0 0 18 9" : "0 0 10 6"}>
    {big ? <path d="M0 8.5 H18 L12 1 L8 5 L6 3Z" stroke="#333" fill="#e8e8e8" /> : <path d="M0 5.5 H10 L5 1Z" stroke="#444" fill="#ddd" />}
  </Svg>
);
const Knob = () => (
  <Svg w={10} h={9} vb="0 0 10 9"><path d="M5 .5 L9.5 5 V8.5 H.5 V5Z" fill="#dff0dc" stroke="#3f7a4c" /></Svg>
);
const LockIcon = ({ c = "#a8a8a8", s = 11 }) => (
  <Svg w={s} h={s} vb="0 0 11 11"><path d="M3 5 V3.5 C3 1 8 1 8 3.5 V5" stroke={c} strokeWidth="1.2" /><rect x="1.5" y="5" width="8" height="5.5" fill={c} /></Svg>
);
const UnifyIcon = ({ kind }: { kind: string }) => (
  <Svg w={15} h={13} vb="0 0 15 13">
    {kind === "pos" && <path d="M1 4 H6 M3.5 1.5 V6.5" stroke="#aaa" strokeDasharray="1 1" />}
    {kind === "eye" && <path d="M1 3.5 C3 1 7 1 9 3.5 C7 6 3 6 1 3.5Z" fill="#bbb" stroke="#999" />}
    {kind === "style" && <circle cx="5" cy="4" r="3.5" fill="#bbb" stroke="#999" />}
    <path d="M8 7 V6 C8 4 12 4 12 6 V7" stroke="#999" />
    <rect x="7" y="7" width="6" height="5.5" fill="#a4a4a4" />
  </Svg>
);
const Trash = () => (
  <Svg w={14} h={14} vb="0 0 14 14"><path d="M2 3 L12 2 M5 2 L9 1.5" stroke="#222" strokeWidth="1.2" /><path d="M3 4 H11 L10 13 H4Z" fill="#ddd" stroke="#333" /><path d="M5.5 5 V12 M8.5 5 V12" stroke="#333" /></Svg>
);
const TrashDim = () => (
  <Svg w={14} h={14} vb="0 0 14 14"><path d="M2 3 L12 2" stroke="#999" strokeWidth="1.2" /><path d="M3 4 H11 L10 13 H4Z" fill="#eee" stroke="#999" /><path d="M5.5 5 V12 M8.5 5 V12" stroke="#999" /></Svg>
);

const Tabs = ({ items }: { items: [string, number][] }) => (
  <TabStrip>
    {items.map(([t, w], i) => <PanelTab key={t} $w={w} $on={i === 0}>{t}</PanelTab>)}
    <TabCap><MenuDot /></TabCap>
  </TabStrip>
);
const Caption = () => (
  <CaptionStrip>
    <CapBtn><CapMin /></CapBtn>
    <CapBtn $close><CloseGlyph s={9} /></CapBtn>
  </CaptionStrip>
);

const menu: [string, string][] = [["文件", "F"], ["编辑", "E"], ["图像", "I"], ["图层", "L"], ["选择", "S"], ["滤镜", "T"], ["视图", "V"], ["窗口", "W"], ["帮助", "H"]];

const T = ({ n, a, more = true }: { n: string; a?: boolean; more?: boolean }) => <Tool $active={a} $more={more}>{tools[n]}</Tool>;

export default function App() {
  return (
    <Shell>
      <Global />
      <AppBar>
        <AppIcon />
        <AppTitle>Adobe Photoshop</AppTitle>
        <WinButtons $h={15} $mr={0} $mt={3}>
          <WinButton $w={26}><MinGlyph /></WinButton>
          <WinButton $w={22}><RestoreGlyph /></WinButton>
          <WinButton $w={22} $close><CloseGlyph /></WinButton>
        </WinButtons>
      </AppBar>
      <MenuBar>
        {menu.map(([t, k]) => <MenuItem key={t}>{t}<Accel>({k})</Accel></MenuItem>)}
      </MenuBar>
      <OptionsBar>
        <Grip />
        <IconCell $w={54}>
          <CropIcon s={19} />
          <Svg w={6} h={4} vb="0 0 6 4"><path d="M0 0 H6 L3 3.5Z" fill="#222" /></Svg>
        </IconCell>
        <BarSep />
        <BarLabel $w={32} $ml={4}>宽度:</BarLabel>
        <BarField />
        <IconCell $w={31}>
          <Svg w={13} h={11} vb="0 0 13 11"><path d="M0 3 H10 M7.5 .5 L10.5 3 L7.5 5.5 M13 8 H3 M5.5 5.5 L2.5 8 L5.5 10.5" stroke="#555" strokeWidth="1.2" /></Svg>
        </IconCell>
        <BarLabel $w={31}>高度:</BarLabel>
        <BarField />
        <BarSep $ml={4} />
        <BarLabel $w={44} $ml={4}>分辨率:</BarLabel>
        <BarField />
        <BarSelect>像素/英寸<SelectArrow><Chev dir="down" c="#2a3f9a" /></SelectArrow></BarSelect>
        <BarSep $ml={4} />
        <BarButton $w={80} $ml={7}>前面的图像</BarButton>
        <BarButton $w={57} $ml={10}>清除</BarButton>
        <BarSep $ml={8} />
        <BarSep $ml={148} />
        <IconCell $w={37}>
          <Svg w={22} h={24} vb="0 0 22 24">
            <path d="M2 5 H15 V21 H2Z" fill="#f4f4f4" stroke="#333" />
            <path d="M5 8 L12 18 M12 9 L6 18 M5 16 H11" stroke="#555" strokeWidth="1.5" />
            <circle cx="16" cy="6" r="3" fill="#fff" stroke="#222" />
            <path d="M18 8 L21 12" stroke="#222" strokeWidth="1.5" />
          </Svg>
        </IconCell>
        <Well>
          <WellTab $w={37}>画笔</WellTab>
          <WellTab $w={63}>工具预设</WellTab>
          <WellTab $w={62}>图层复合</WellTab>
          <WellTab $w={52}>动画</WellTab>
        </Well>
      </OptionsBar>

      <Desktop>
        <Palette as="aside" $x={7} $y={103} $w={63} $h={424}>
          <FeatherBox><FeatherArt /></FeatherBox>
          <PalSep />
          <ToolGrid $pt={1} $pb={2}>
            <T n="marquee" /><T n="move" more={false} />
            <T n="lasso" /><T n="wand" more={false} />
            <T n="crop" a more={false} /><T n="slice" />
          </ToolGrid>
          <PalSep />
          <ToolGrid $pt={2} $pb={2}>
            <T n="heal" /><T n="brush" />
            <T n="stamp" /><T n="histBrush" />
            <T n="eraser" /><T n="gradient" />
            <T n="drop" /><T n="burn" />
          </ToolGrid>
          <PalSep />
          <ToolGrid $pt={2} $pb={2}>
            <T n="arrow" /><T n="type" />
            <T n="pen" /><T n="shape" />
          </ToolGrid>
          <PalSep />
          <ToolGrid $pt={2} $pb={2}>
            <T n="notes" /><T n="eyedrop" />
            <T n="hand" more={false} /><T n="zoom" more={false} />
          </ToolGrid>
          <PalSep />
          <ColorBlock>
            <FgSwatch /><BgSwatch />
            <OverIcon $l={38} $t={6}>
              <Svg w={11} h={11} vb="0 0 11 11"><path d="M1 4 C2 1 6 1 9 4 M9 1 V4.5 H5.5 M2 6 L7 10.5 M10 8 L7 10.5 L7 7" stroke="#222" strokeWidth="1.1" /></Svg>
            </OverIcon>
            <OverIcon $l={6} $t={39}>
              <Svg w={11} h={11} vb="0 0 11 11"><rect x="3" y="3" width="8" height="8" fill="#fff" stroke="#222" /><rect x="0" y="0" width="7" height="7" fill="#111" /></Svg>
            </OverIcon>
          </ColorBlock>
          <PalSep />
          <ModeRow $h={29}>
            <ModeButton $w={22} $active>
              <Svg w={18} h={15} vb="0 0 18 15"><rect x=".5" y=".5" width="17" height="14" fill="#fff" stroke="#333" /><circle cx="9" cy="7.5" r="5" fill="#eee" stroke="#555" /></Svg>
            </ModeButton>
            <ModeButton $w={20} $dark>
              <Svg w={18} h={15} vb="0 0 18 15"><circle cx="9" cy="7.5" r="5.5" fill="#fff" stroke="#555" /></Svg>
            </ModeButton>
          </ModeRow>
          <PalSep />
          <ModeRow $h={22}>
            <ScreenBtn $active><Svg w={13} h={12} vb="0 0 13 12"><rect x="1" y="1" width="10" height="9" fill="#ddd" stroke="#444" /><rect x="3" y="4" width="8" height="5" fill="#f4f4f4" stroke="#444" /></Svg></ScreenBtn>
            <ScreenBtn><Svg w={12} h={13} vb="0 0 12 13"><Grad id="sb1" a="#eee" b="#999" /><rect x=".5" y=".5" width="11" height="12" rx="1.5" fill="url(#sb1)" stroke="#444" /><path d="M1 3 H11" stroke="#444" /></Svg></ScreenBtn>
            <ScreenBtn><Svg w={12} h={13} vb="0 0 12 13"><Grad id="sb2" a="#eee" b="#888" /><rect x=".5" y=".5" width="11" height="12" rx="1.5" fill="url(#sb2)" stroke="#444" /></Svg></ScreenBtn>
          </ModeRow>
          <PalSep />
          <JumpRow>
            <Svg w={26} h={16} vb="0 0 26 16"><path d="M1 3 H13 V15 H1Z" fill="#eee" stroke="#333" /><rect x="0" y="1" width="13" height="3" fill="#444" /><path d="M8 10 C10 6 14 6 17 6 V3 L25 8 L17 13 V10 C14 10 10 10 8 12Z" fill="#999" stroke="#222" /></Svg>
            <Svg w={16} h={16} vb="0 0 16 16"><rect x=".5" y=".5" width="15" height="15" fill="#f0f0f0" stroke="#bbb" /><path d="M2 1 C8 2 13 8 14 15 C8 14 3 8 2 1Z" fill="#777" /></Svg>
          </JumpRow>
        </Palette>

        <DocWindow as="article" $x={140} $y={150} $w={833} $h={534}>
          <DocTitle>
            <AppIcon />
            <DocTitleText><DocTitleHan>黄晓敏 平面图</DocTitleHan>.bmp @ 66.7%(RGB/8)</DocTitleText>
            <WinButtons $h={13} $mr={6} $mt={5}>
              <WinButton $w={26}><MinGlyph /></WinButton>
              <WinButton $w={23}><MaxGlyph /></WinButton>
              <WinButton $w={29} $close><CloseGlyph /></WinButton>
            </WinButtons>
          </DocTitle>
          <DocMain>
            <DocArea>
              <PathTip>C:\Documents and Settings\Administrator\<TipHan>桌面</TipHan>\<TipHan>黄晓敏 平面图</TipHan>.bmp @ 66.7%(RGB/8)</PathTip>
              <Artboard><Plan /></Artboard>
            </DocArea>
            <ScrollV>
              <ScrollBtn $w={15} $h={16}><Chev dir="up" /></ScrollBtn>
              <ScrollBtn $w={15} $h={16}><Chev dir="down" /></ScrollBtn>
            </ScrollV>
          </DocMain>
          <StatusBar>
            <StatusZoom>66.67%</StatusZoom>
            <StatusIcon>
              <Svg w={13} h={13} vb="0 0 13 13"><circle cx="6.5" cy="6.5" r="6" fill="#ccc" /><path d="M3 3 H10 V10 H3Z" fill="#fff" stroke="#333" /><path d="M6.5 3.5 V6.5 H9.5" stroke="#333" /></Svg>
            </StatusIcon>
            <StatusInfo>文档:1.79M/1.66M</StatusInfo>
            <StatusArrow><Svg w={7} h={10} vb="0 0 7 10"><path d="M0 0 L7 5 L0 10Z" fill="#000" /></Svg></StatusArrow>
            <ScrollH>
              <ScrollBtn $w={16} $h={14}><Chev dir="left" /></ScrollBtn>
              <ScrollBtn $w={16} $h={14}><Chev dir="right" /></ScrollBtn>
            </ScrollH>
            <Corner><Grip3 /></Corner>
          </StatusBar>
        </DocWindow>

        <PanelFrame $x={1053} $y={90} $w={214} $h={144}>
          <Caption />
          <PanelBody>
            <Tabs items={[["导航器", 55], ["信息", 41], ["直方图", 56]]} />
            <Thumb><Plan mini dim={.42} /></Thumb>
            <NavFoot>
              <NavZoom>66.67%</NavZoom>
              <IconCell $w={20} $ml={2}><Mountain /></IconCell>
              <NavSlider><NavKnob><Svg w={10} h={14} vb="0 0 10 14"><Grad id="nk" a="#fff" b="#7dd77a" /><path d="M5 .5 L9.5 4 V13.5 H.5 V4Z" fill="url(#nk)" stroke="#4a8a55" /></Svg></NavKnob></NavSlider>
              <Mountain big />
              <Grip2><Grip3 /></Grip2>
            </NavFoot>
          </PanelBody>
        </PanelFrame>

        <PanelFrame $x={1053} $y={237} $w={214} $h={144}>
          <Caption />
          <PanelBody>
            <Tabs items={[["颜色", 42], ["色板", 43], ["样式", 50]]} />
            <ColorMain>
              <SwatchPair><ColorFg /><ColorBg /></SwatchPair>
              <Sliders>
                {[["R", "#f01010"], ["G", "#20e030"], ["B", "#0000c8"]].map(([n, c]) => (
                  <SliderRow key={n}>
                    <ChanLabel>{n}</ChanLabel>
                    <ChanBar $c={c}><ChanKnob><Knob /></ChanKnob></ChanBar>
                    <ChanValue>0</ChanValue>
                  </SliderRow>
                ))}
              </Sliders>
            </ColorMain>
            <Spectrum><SpectrumRamp /><SpectrumEnds /></Spectrum>
          </PanelBody>
        </PanelFrame>

        <PanelFrame $x={1049} $y={385} $w={226} $h={144}>
          <Caption />
          <PanelBody>
            <Tabs items={[["历史记录", 66], ["动作", 48]]} />
            <PaneRow>
              <PaneList>
                <SnapRow>
                  <SmallBox><Svg w={11} h={11} vb="0 0 11 11"><path d="M10 1 L5 6 M6 5 C3 6 3 9 1 10 C4 10.5 6 9 6.5 6.5 M1 4 C2 1 5 1 7 1" stroke="#333" /></Svg></SmallBox>
                  <Mini><Plan mini dim={.2} /></Mini>
                  <SnapName>黄晓敏 平面图.bmp</SnapName>
                </SnapRow>
                <DoubleRule />
                <HistRow>
                  <HistCheck />
                  <HistMark>
                    <HistArrow><Svg w={9} h={11} vb="0 0 9 11"><path d="M1 1 H4 L8 5.5 L4 10 H1Z" fill="#fff" stroke="#111" strokeWidth="1.3" /></Svg></HistArrow>
                    <Svg w={16} h={16} vb="0 0 16 16"><path d="M1 2 H11 V14 H1Z" fill="#ddd" stroke="#222" /><path d="M3 5 H9 M3 8 H9 M3 11 H8" stroke="#222" /><path d="M11 10 L15 13 L11 15Z" fill="#111" /></Svg>
                    <span>打开</span>
                  </HistMark>
                </HistRow>
              </PaneList>
              <ScrollV>
                <ScrollBtn $w={15} $h={16}><Chev dir="up" /></ScrollBtn>
                <ScrollBtn $w={15} $h={16}><Chev dir="down" /></ScrollBtn>
              </ScrollV>
            </PaneRow>
            <PaneFoot>
              <FootIcons $gap={17} $pl={127}>
                <Svg w={13} h={12} vb="0 0 13 12"><rect x="1" y="1" width="11" height="10" fill="#ddd" stroke="#333" /><path d="M1 3.5 H12 M3 7 H10 V9 H3Z" stroke="#333" /></Svg>
                <Svg w={14} h={12} vb="0 0 14 12"><rect x=".5" y="2" width="13" height="9.5" fill="#e8e8e8" stroke="#333" /><circle cx="7" cy="6.5" r="3" fill="#fff" stroke="#222" /><rect x="9" y="0" width="3" height="2" fill="#333" /></Svg>
                <Trash />
              </FootIcons>
            </PaneFoot>
          </PanelBody>
        </PanelFrame>

        <PanelFrame $x={1053} $y={534} $w={214} $h={225}>
          <Caption />
          <PanelBody>
            <Tabs items={[["图层", 42], ["通道", 41], ["路径", 50]]} />
            <OptRow $h={26}>
              <BlendSelect>正常<BlendArrow><Chev dir="down" /></BlendArrow></BlendSelect>
              <OptLabel $w={52} $ml={14}>不透明度:</OptLabel>
              <PctField>100%<PctStep><Chev dir="right" /></PctStep></PctField>
            </OptRow>
            <OptRow $h={26}>
              <OptLabel $w={29}>统一:</OptLabel>
              <IconRow $gap={2} $ml={5}>
                <UnifyIcon kind="pos" /><UnifyIcon kind="eye" /><UnifyIcon kind="style" />
              </IconRow>
              <Check><Chev dir="down" c="#aaa" s={8} /></Check>
              传播帧 1
            </OptRow>
            <OptRow $h={26}>
              <OptLabel $w={29}>锁定:</OptLabel>
              <IconRow $gap={6} $ml={4}>
                <Svg w={12} h={12} vb="0 0 12 12"><rect x=".5" y=".5" width="11" height="11" fill="#eee" stroke="#999" /><path d="M1 1h3v3H1zM7 1h3v3H7zM4 4h3v3H4zM1 7h3v3H1zM7 7h3v3H7z" fill="#ccc" /></Svg>
                <Svg w={13} h={13} vb="0 0 13 13"><path d="M12 1 L5 8 M6 7 C3 8 3 11 1 12 C5 12 7 10 7.5 8" stroke="#999" strokeWidth="1.4" /></Svg>
                <Svg w={13} h={13} vb="0 0 13 13"><path d="M6.5 1 V12 M1 6.5 H12 M6.5 0 L4.5 2.5 H8.5Z M6.5 13 L4.5 10.5 H8.5Z M0 6.5 L2.5 4.5 V8.5Z M13 6.5 L10.5 4.5 V8.5Z" stroke="#888" fill="#888" strokeWidth=".8" /></Svg>
                <LockIcon c="#999" />
              </IconRow>
              <OptLabel $w={28} $ml={29}>填充:</OptLabel>
              <PctField>100%<PctStep><Chev dir="right" /></PctStep></PctField>
            </OptRow>
            <PaneRow>
              <PaneList>
                <LayerRow>
                  <EyeCell><Svg w={14} h={9} vb="0 0 14 9"><path d="M1 4.5 C4 .5 10 .5 13 4.5 C10 8.5 4 8.5 1 4.5Z" fill="#fff" stroke="#111" /><circle cx="7" cy="4.5" r="2.6" fill="#111" /></Svg></EyeCell>
                  <LayerMark>
                    <LayerThumb><Plan mini dim={.2} /></LayerThumb>
                    <LayerName>背景</LayerName>
                    <LockIcon c="#111" s={11} />
                  </LayerMark>
                </LayerRow>
              </PaneList>
              <ScrollV>
                <ScrollBtn $w={15} $h={16}><Chev dir="up" /></ScrollBtn>
                <ScrollBtn $w={15} $h={16}><Chev dir="down" /></ScrollBtn>
              </ScrollV>
            </PaneRow>
            <PaneFoot>
              <FootIcons $gap={11} $pl={11}>
                <Svg w={18} h={10} vb="0 0 18 10"><rect x="1" y="1.5" width="9" height="7" rx="3.5" stroke="#777" strokeWidth="1.3" /><rect x="8" y="1.5" width="9" height="7" rx="3.5" stroke="#777" strokeWidth="1.3" /></Svg>
                <Svg w={16} h={13} vb="0 0 16 13"><circle cx="6.5" cy="6.5" r="6" fill="#888" /><path d="M4 11 C6 7 7 4 10 2" stroke="#fff" strokeWidth="1.2" /><path d="M14 11h2v2h-2z" fill="#555" /></Svg>
                <Svg w={15} h={13} vb="0 0 15 13"><rect x=".5" y=".5" width="14" height="12" fill="#ccc" stroke="#999" /><circle cx="7.5" cy="6.5" r="4" fill="#fff" stroke="#666" /></Svg>
                <Svg w={18} h={14} vb="0 0 18 14"><circle cx="7" cy="7" r="6.5" fill="#f4f4f4" stroke="#333" /><path d="M2.5 11.5 A6.5 6.5 0 0 0 11.5 2.5Z" fill="#222" /><path d="M15 12h2v2h-2z" fill="#333" /></Svg>
                <Svg w={14} h={11} vb="0 0 14 11"><path d="M1 2 H5 L6.5 3.5 H13 V10.5 H1Z" fill="#eee" stroke="#333" /></Svg>
                <Svg w={12} h={12} vb="0 0 12 12"><rect x=".5" y=".5" width="11" height="11" fill="#fff" stroke="#333" /><path d="M5 6 H8 V9 H5Z" fill="#333" /></Svg>
                <TrashDim />
              </FootIcons>
            </PaneFoot>
          </PanelBody>
        </PanelFrame>
      </Desktop>
    </Shell>
  );
}
